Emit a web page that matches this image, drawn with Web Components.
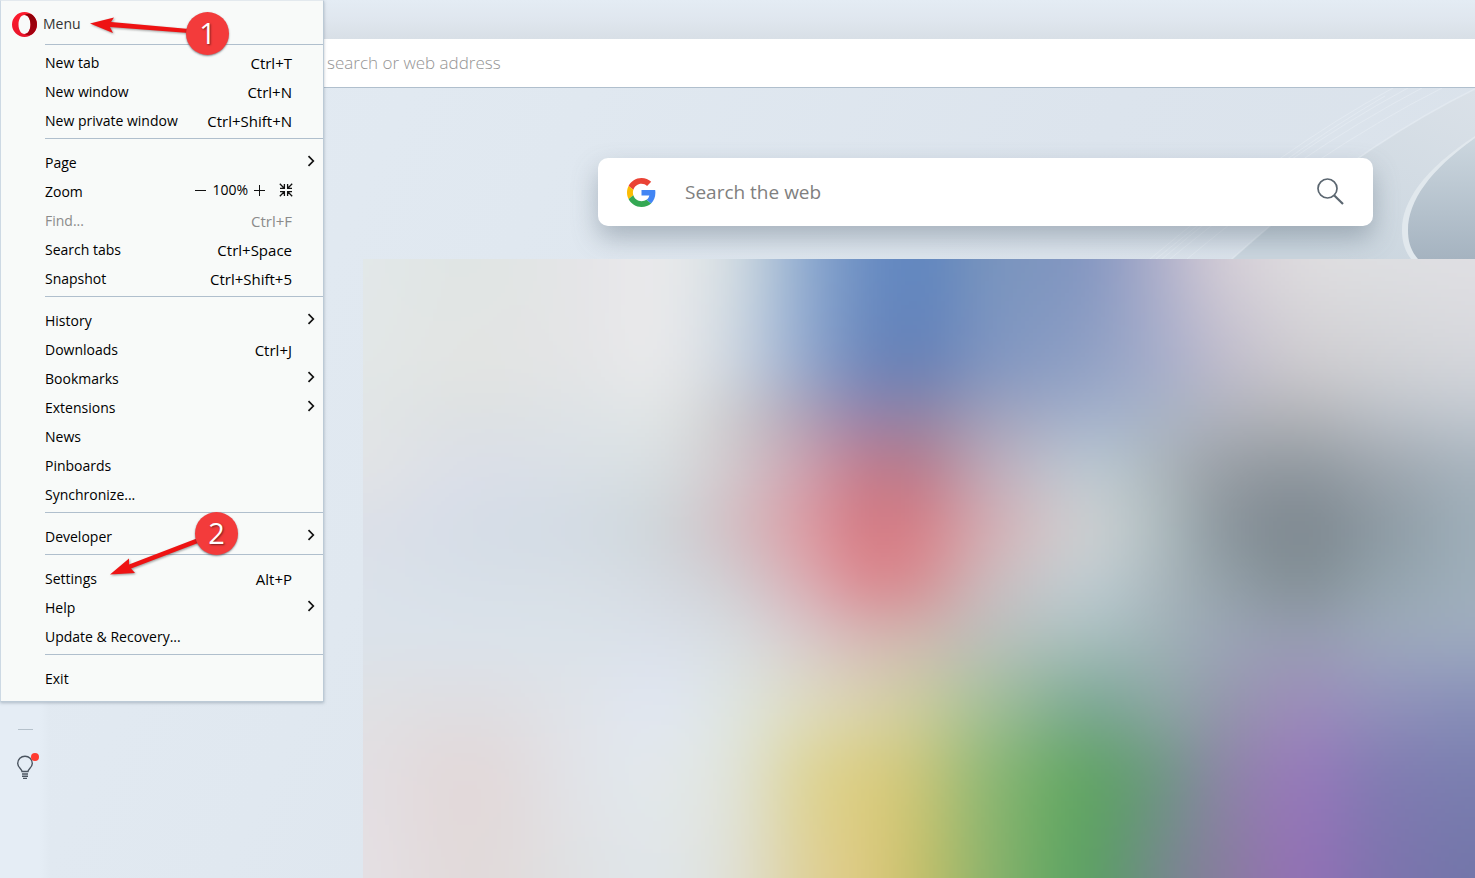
<!DOCTYPE html>
<html lang="en">
<head>
<meta charset="utf-8">
<title>Speed Dial</title>
<style>
html,body{margin:0;height:100%}
body{font-family:"Open Sans","Noto Sans",sans-serif;overflow:hidden}
</style>
</head>
<body>
<browser-window></browser-window>
<script>
const define = (name, html, ready) => {
  const template = document.createElement('template');
  template.innerHTML = html;
  customElements.define(name, class extends HTMLElement {
    constructor() {
      super();
      this.attachShadow({mode: 'open'}).append(template.content.cloneNode(true));
    }
    connectedCallback() { if (ready) ready(this, this.shadowRoot); }
  });
};

/* One command of the menu: label in the default slot, shortcut in an attribute. */
define('menu-item', `
<style>
:host{display:block}
button{display:flex;align-items:center;justify-content:space-between;width:100%;height:29px;margin:0;padding:0 31px 0 44px;border:0;background:none;font:14px/20px "Open Sans","Noto Sans",sans-serif;color:#000;text-align:left;white-space:nowrap}
button:disabled{color:#8b8b8b}
.key{font-size:15px}
:host([submenu]) button{padding-right:8px}
svg{display:none;width:8px;height:12px;margin-bottom:3px}
:host([submenu]) svg{display:block}
:host([submenu]) .key{display:none}
</style>
<button type="button"><span><slot></slot></span><span class="key"></span><svg viewBox="0 0 8 12" fill="none" stroke="#111" stroke-width="1.7"><path d="M1.500 1.200L6.300 6l-4.800 4.800"/></svg></button>`,
(host, root) => {
  root.querySelector('.key').textContent = host.getAttribute('key') || '';
  root.querySelector('button').disabled = host.hasAttribute('disabled');
});

define('menu-group', `
<style>
:host{display:block;padding-top:9px}
:host([first]){padding-top:3px}
:host([last]){padding-bottom:8px}
hr{margin:3px 0 0 44px;border:0;height:1px;background:#b0bfcd}
:host([last]) hr{display:none}
</style>
<slot></slot><hr>`);

define('zoom-row', `
<style>
:host{display:flex;align-items:center;height:29px;padding:0 30px 0 44px;font-size:14px;line-height:20px;color:#000}
.label{flex:1}
.controls{display:flex;align-items:center;margin-bottom:3px}
button{display:flex;padding:0;border:0;background:none;color:#000}
output{margin:0 6px}
.full{margin-left:14px}
svg{display:block;fill:none;stroke:#111}
</style>
<span class="label">Zoom</span>
<div class="controls">
<button type="button" aria-label="Zoom out"><svg width="11" height="11"><path d="M0 5.500H11"/></svg></button>
<output>100%</output>
<button type="button" aria-label="Zoom in"><svg width="11" height="11"><path d="M0 5.500H11M5.500 0V11"/></svg></button>
<button class="full" type="button" aria-label="Full screen"><svg width="14" height="14" stroke-width="1.300"><path d="M.8.8l4.200 4.200M5.400 1v4.400H1M13.200.8L9 5M8.600 1v4.400H13M.8 13.200L5 9M5.400 13V8.600H1M13.200 13.200L9 9M8.600 13V8.600H13"/></svg></button>
</div>`);

define('main-menu', `
<style>
:host{display:block;box-sizing:border-box;background:#f8faf9;border:1px solid #cdd9e4;border-top-color:#e3e9ee;border-right-color:#bccad6;border-bottom-color:#bccad6;box-shadow:0 1px 3px rgba(70,90,110,.35)}
header{display:flex;align-items:center;gap:6px;height:43px;padding:3px 0 0 11px;box-sizing:border-box;font-size:14px;line-height:20px;color:#333}
header svg{width:25px;height:25px}
.rule{height:1px;margin-left:44px;background:#b0bfcd}
</style>
<header>
<svg viewBox="0 0 25 25"><defs><linearGradient id="a" x2="0" y2="1"><stop stop-color="#ff1b2d"/><stop offset="1" stop-color="#e8152b"/></linearGradient><linearGradient id="b" x2="0" y2="1"><stop stop-color="#8f0008"/><stop offset="1" stop-color="#a80012"/></linearGradient></defs><path fill="url(#a)" fill-rule="evenodd" d="M12.500 0a12.500 12.500 0 1 0 0 25 12.500 12.500 0 1 0 0-25zM12.500 3c3.600 0 6 4.200 6 9.500s-2.400 9.500-6 9.500-6-4.200-6-9.500 2.400-9.500 6-9.500z"/><path fill="url(#b)" d="M12.500 3C15 1.200 18 1.200 20.600 3A12.500 12.500 0 0 1 20.600 22C18 23.800 15 23.800 12.500 22c3.600 0 6-4.200 6-9.500S16.100 3 12.500 3z"/></svg>
<span>Menu</span></header>
<div class="rule"></div>
<nav>
<menu-group first><menu-item key="Ctrl+T">New tab</menu-item><menu-item key="Ctrl+N">New window</menu-item><menu-item key="Ctrl+Shift+N">New private window</menu-item></menu-group>
<menu-group><menu-item submenu>Page</menu-item><zoom-row></zoom-row><menu-item key="Ctrl+F" disabled>Find...</menu-item><menu-item key="Ctrl+Space">Search tabs</menu-item><menu-item key="Ctrl+Shift+5">Snapshot</menu-item></menu-group>
<menu-group><menu-item submenu>History</menu-item><menu-item key="Ctrl+J">Downloads</menu-item><menu-item submenu>Bookmarks</menu-item><menu-item submenu>Extensions</menu-item><menu-item>News</menu-item><menu-item>Pinboards</menu-item><menu-item>Synchronize...</menu-item></menu-group>
<menu-group><menu-item submenu>Developer</menu-item></menu-group>
<menu-group><menu-item key="Alt+P">Settings</menu-item><menu-item submenu>Help</menu-item><menu-item>Update &amp; Recovery...</menu-item></menu-group>
<menu-group last><menu-item>Exit</menu-item></menu-group>
</nav>`);

/* Numbered marker with an arrow that points at a menu entry. */
define('step-marker', `
<style>
:host{display:block;width:150px;height:70px;pointer-events:none}
svg{position:absolute;inset:0;width:150px;height:70px;overflow:visible;filter:drop-shadow(1px 1px 1px rgba(60,60,60,.5))}
.badge{position:absolute;right:10px;top:0;width:43px;height:43px;border-radius:50%;background:#f33b3b;box-shadow:0 1px 2px rgba(50,60,70,.6);color:#fff;font-size:29px;line-height:42px;font-weight:500;text-align:center;text-shadow:1px 1px 2px rgba(0,0,0,.5)}
</style>
<svg viewBox="0 0 150 70"><path fill="#ee1313" d=""/></svg><div class="badge"><slot></slot></div>`,
(host, root) => root.querySelector('path').setAttribute('d', host.getAttribute('arrow')));

define('search-box', `
<style>
:host{display:block}
form{display:flex;align-items:center;height:68px;padding:0 29px;background:#fff;border-radius:10px;box-shadow:0 12px 26px rgba(90,108,122,.42)}
.g{width:29px;height:29px;flex:none}
input{flex:1;min-width:0;margin:0 0 0 29px;padding:0;border:0;outline:0;background:none;font:19px/28px "Open Sans","Noto Sans",sans-serif}
input::placeholder{color:#808080;opacity:1}
button{padding:0;border:0;background:none;display:flex}
</style>
<form><svg class="g" viewBox="0 0 48 48"><path fill="#EA4335" d="M24 9.500c3.540 0 6.710 1.220 9.210 3.600l6.850-6.850C35.900 2.380 30.470 0 24 0 14.620 0 6.510 5.380 2.560 13.220l7.980 6.190C12.430 13.720 17.740 9.500 24 9.500z"/><path fill="#4285F4" d="M46.980 24.550c0-1.570-.15-3.090-.38-4.550H24v9.020h12.940c-.58 2.960-2.260 5.480-4.780 7.180l7.730 6c4.510-4.180 7.090-10.360 7.090-17.650z"/><path fill="#FBBC05" d="M10.530 28.590c-.48-1.450-.76-2.990-.76-4.590s.27-3.140.76-4.590l-7.980-6.190C.92 16.460 0 20.120 0 24c0 3.880.92 7.540 2.560 10.780l7.970-6.190z"/><path fill="#34A853" d="M24 48c6.480 0 11.930-2.130 15.890-5.810l-7.730-6c-2.150 1.450-4.920 2.300-8.160 2.300-6.260 0-11.570-4.220-13.470-9.910l-7.980 6.190C6.510 42.620 14.620 48 24 48z"/></svg>
<input type="text" aria-label="Search the web" placeholder="Search the web">
<button type="button" aria-label="Search"><svg width="27" height="28" viewBox="0 0 27 28" fill="none" stroke="#5b6670"><circle cx="10.500" cy="10.500" r="9.500" stroke-width="1.700"/><path d="M17.300 17.500L26 26" stroke-width="2.200"/></svg></button></form>`);

/* Frosted tiles: a colour mesh, interpolated between its knots and then softened. */
define('frosted-tiles', `
<style>:host{display:block;overflow:hidden}canvas{display:block;width:100%;height:100%}</style>
<canvas width="278" height="155" role="img" aria-label="Speed dial tiles"></canvas>`,
(host, root) => {
  const xs = [0,111,222,298,369,445,503,556,627,726,804,854,939,1017,1112];
  const ys = [0,103,158,206,268,328,379,446,516,619];
  const mesh = [
    'e2e8e9 e0e5e4 e5e5e8 e8e9eb d2dce2 8fabd0 6d90c4 6187c0 7894be 8698c2 b3b3cc d0cad5 dedcdf dedfe2 e0dfe3',
    'e2e7e7 e2e4e3 e4e5e7 e7e8ea cdd5df 95a7cb 7389bb 6c83b7 8296c0 92a2c5 a9afca bcbacb cccacf d0d1d5 d4d6db',
    'e1e5e6 dde1e3 dee3e6 dfe3e4 cccace b0a0b6 9a84a9 9585a5 a2a1bb a5b2cb a9b3c4 aeb2bd b1b3b8 b9bec5 c0c7cf',
    'e2e4e6 dbdfe8 dae0e5 d8dde0 d1c7cc cb9fae c07f91 b87f91 bdaab9 bac6d0 abb4bb 9ca2a9 939ba2 9fa7af a9b5bf',
    'dce0e8 d6dde7 d3dbe3 d0d5d9 d3bfc4 db9ba3 d57d86 d5838b d2adb3 cbced0 acb9bd 909ba2 808a92 8d9aa3 9fafba',
    'dbe2ea d8e0e8 d8dfe6 d5dae1 d2ced2 daaeb4 da9096 d59599 cabbbd bdcacf a8b5bb 97a4ac 87939b 94a3ad 9fafbc',
    'dbe2ea dbe2ea dae2e9 dae0e9 d8dcdf d8c9c9 d5b9b6 ceb9b1 bbbfba a8bebd a0b1b7 9ba6b5 979cb2 9ba6ba 9daabf',
    'e0e1e4 dfdee2 e0e4ea e0e6f0 dee4e0 dddabf d8d1ac cacb9e a4bf99 7faa95 8ea5a5 9499ac 9b8db9 9291ba 8890b8',
    'e3dfe3 e2d9da e1e4e9 e2e8ea e0e3d8 ddd59b dacd83 c8c67c 90b877 64a569 739689 8a88a3 967bb9 847db3 7b80b0',
    'e5e0e4 e1dada e0e2e4 e0e5e8 e0e0d4 ded19a dcc980 c4c06b 8cb36b 5da165 77878e 867e9c 9271b4 7f73ae 7276a9'
  ].map(row => row.split(' ').map(c => [0,2,4].map(i => parseInt(c.substr(i, 2), 16))));
  const spline = (k, v, t) => {
    let i = 0;
    while (i < k.length - 2 && t > k[i + 1]) i++;
    const slope = j => {
      const a = Math.max(0, j - 1), b = Math.min(k.length - 1, j + 1);
      return (v[b] - v[a]) / (k[b] - k[a]);
    };
    const h = k[i + 1] - k[i], s = (t - k[i]) / h, s2 = s * s, s3 = s2 * s;
    return (2*s3 - 3*s2 + 1) * v[i] + (s3 - 2*s2 + s) * h * slope(i) + (3*s2 - 2*s3) * v[i + 1] + (s3 - s2) * h * slope(i + 1);
  };
  const soften = (line, radius) => line.map((_, i) => {
    let sum = 0;
    for (let d = -radius; d <= radius; d++) {
      sum += line[Math.min(line.length - 1, Math.max(0, i + d))];
    }
    return sum / (2 * radius + 1);
  });
  const smooth = line => soften(soften(line, 6), 5);
  const canvas = root.querySelector('canvas'), ctx = canvas.getContext('2d');
  const w = canvas.width, h = canvas.height, image = ctx.createImageData(w, h);
  for (let c = 0; c < 3; c++) {
    const columns = xs.map((_, i) => {
      const values = mesh.map(row => row[i][c]);
      return smooth(Array.from({length: h}, (_, y) => spline(ys, values, y / (h - 1) * 619)));
    });
    for (let y = 0; y < h; y++) {
      const values = columns.map(col => col[y]);
      const line = smooth(Array.from({length: w}, (_, x) => spline(xs, values, x / (w - 1) * 1112)));
      line.forEach((v, x) => { image.data[(y * w + x) * 4 + c] = v; });
    }
  }
  for (let i = 3; i < image.data.length; i += 4) image.data[i] = 255;
  ctx.putImageData(image, 0, 0);
});

define('side-bar', `
<style>
:host{display:flex;flex-direction:column;justify-content:flex-end;align-items:center;box-sizing:border-box;width:50px;padding:0 0 98px;background:linear-gradient(90deg,#e5edf5 80%,#e1e9f1)}
hr{width:15px;height:1px;margin:0 0 23px;border:0;background:#b5c1cb}
button{position:relative;padding:0;border:0;background:none;display:flex}
i{position:absolute;left:15px;top:0;width:8px;height:8px;border-radius:50%;background:#ff3b30}
</style>
<hr><button type="button" aria-label="Tips"><svg width="18" height="28" viewBox="0 0 18 28" fill="none" stroke="#4b5560" stroke-width="1.400"><path d="M6 18.500C6 16 1.700 14.500 1.700 10.500a7.300 7.300 0 0 1 14.600 0C16.300 14.500 12 16 12 18.500zM6 21h6M6 23.200h6M7 25.400h4"/></svg><i></i></button>`);

define('start-page', `
<style>
:host{display:flex;flex-direction:column;position:relative;min-width:0;background:linear-gradient(115deg,#e3ebf3 0%,#e0e8f0 30%,#dce4ed 60%,#d9e1e9 100%)}
.art{position:absolute;right:0;top:0;width:335px;height:171px}
search-box{position:relative;margin:70px 102px 33px 548px}
frosted-tiles{position:relative;flex:1;min-height:0;margin-left:313px}
</style>
<svg class="art" viewBox="0 0 335 171"><defs><linearGradient id="d" x2="0" y2="1"><stop stop-color="#ccd7df"/><stop offset="1" stop-color="#a5b3c0"/></linearGradient><linearGradient id="s" x1="1" y1="0" x2=".4" y2="1"><stop stop-color="#dae1e8"/><stop offset="1" stop-color="#cbd6df"/></linearGradient></defs>
<path fill="url(#s)" d="M335 1Q215 60 92 171H335z"/>
<g fill="none" stroke="#e9eff5" stroke-width="1" opacity=".55"><path d="M253 0Q142 60 10 171M268 0Q145 66 22 171M282 0Q158 65 30 171M302 0Q172 66 47 171M245 8Q142 68 16 171"/><path stroke-width="1.500" d="M335 1Q215 60 92 171"/></g>
<path fill="url(#d)" d="M335 50C290 80 266 112 266 142 266 154 270 164 277 171H335z"/>
<path fill="#e1e8ed" d="M335 48C283 82 262 114 262 142 262 154 265 163 271 171H278C271 163 268 154 268 142 268 113 290 82 335 50z"/></svg>
<search-box></search-box><frosted-tiles></frosted-tiles>`);

define('browser-window', `
<style>
:host{display:grid;position:relative;min-height:100vh;grid-template-rows:39px 49px 1fr;overflow:hidden;background:#e4ecf4}
.tabs{background:linear-gradient(#e4ecf4,#dfe6ee 55%,#d8dfe6)}
.address{display:flex;align-items:center;padding-left:327px;background:#fff;border-bottom:1px solid #b0bfcd}
.address input{width:100%;padding:0;border:0;outline:0;background:none;font:300 17px/24px "Open Sans","Noto Sans",sans-serif}
.address input::placeholder{color:#949494;opacity:1}
.body{display:grid;grid-template-columns:50px 1fr}
main-menu{position:absolute;left:0;top:0;width:324px}
.one{position:absolute;left:89px;top:12px}
.two{position:absolute;left:98px;top:512px}
</style>
<div class="tabs"></div>
<div class="address"><input type="text" aria-label="Address" placeholder="search or web address"></div>
<div class="body"><side-bar></side-bar><start-page></start-page></div>
<main-menu></main-menu>
<step-marker class="one" arrow="M1 11.500L25 5.500 22 10 100 17V21L21 15 24 21z">1</step-marker>
<step-marker class="two" arrow="M12 62.500L31 46.500 31 52.500 100 26V31L33 56.500 37 61z">2</step-marker>`);
</script>
</body>
</html>
